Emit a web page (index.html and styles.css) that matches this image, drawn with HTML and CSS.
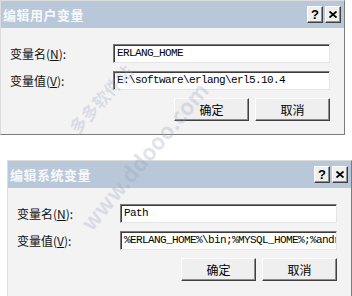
FILE: index.html
```html
<!DOCTYPE html>
<html>
<head>
  <title>编辑变量</title>
  <link rel="stylesheet" href="styles.css">
</head>
<body>
  <div class="page">
    <div class="dialog user">
      <div class="titlebar">
        <span class="title">编辑用户变量</span>
        <div class="caption-btns">
          <span class="cbtn help">?</span>
          <span class="cbtn close"><svg width="8" height="7" viewBox="0 0 8 7"><path d="M0.5 0.5 L7.5 6.5 M7.5 0.5 L0.5 6.5" stroke="#000" stroke-width="1.8" fill="none"/></svg></span>
        </div>
      </div>
      <div class="dialog-body">
        <div class="field">
          <label>变量名(<u>N</u>):</label>
          <div class="textbox">ERLANG_HOME</div>
        </div>
        <div class="field">
          <label>变量值(<u>V</u>):</label>
          <div class="textbox">E:\software\erlang\erl5.10.4</div>
        </div>
        <div class="actions">
          <button>确定</button>
          <button>取消</button>
        </div>
      </div>
    </div>

    <div class="dialog system">
      <div class="titlebar">
        <span class="title">编辑系统变量</span>
        <div class="caption-btns">
          <span class="cbtn help">?</span>
          <span class="cbtn close"><svg width="8" height="7" viewBox="0 0 8 7"><path d="M0.5 0.5 L7.5 6.5 M7.5 0.5 L0.5 6.5" stroke="#000" stroke-width="1.8" fill="none"/></svg></span>
        </div>
      </div>
      <div class="dialog-body">
        <div class="field">
          <label>变量名(<u>N</u>):</label>
          <div class="textbox">Path</div>
        </div>
        <div class="field">
          <label>变量值(<u>V</u>):</label>
          <div class="textbox">%ERLANG_HOME%\bin;%MYSQL_HOME%;%andr</div>
        </div>
        <div class="actions">
          <button>确定</button>
          <button>取消</button>
        </div>
      </div>
    </div>

    <!-- site watermark over the screenshot -->
    <div class="watermark mark-cn">多多软件站</div>
    <div class="watermark mark-url">www.ddooo.com</div>
  </div>
</body>
</html>
```

FILE: styles.css
```css
body {
  margin: 0;
  background: #fff;
  font-family: "Noto Sans CJK SC", "Noto Sans", sans-serif;
}

.page {
  position: relative;
  width: 352px;
  height: 296px;
  overflow: hidden;
}

.dialog {
  box-sizing: border-box;
  width: 345px;
  background: #f3f3f3;
  border: 1px solid;
  border-color: #dcdcdc #7c7c7c #7c7c7c #dcdcdc;
}

.dialog.user {
  height: 135px;
}

.dialog.system {
  margin-top: 25px;
  margin-left: 7px;
  height: 150px;
}

.titlebar {
  height: 27px;
  background: #b9c8d8;
  display: flex;
  align-items: center;
  justify-content: space-between;
  padding: 0 3px 0 2px;
}

.title {
  color: #f6f8fb;
  font-size: 13px;
  font-weight: bold;
  letter-spacing: 0.5px;
}

.caption-btns {
  display: flex;
  gap: 2px;
}

.cbtn {
  box-sizing: border-box;
  width: 16px;
  height: 17px;
  background: #efefef;
  border: 1px solid;
  border-color: #fff #404040 #404040 #fff;
  box-shadow: inset -1px -1px 0 #909090;
  display: flex;
  align-items: center;
  justify-content: center;
  font-family: "Liberation Sans", sans-serif;
  font-size: 13px;
  font-weight: bold;
  color: #000;
  line-height: 1;
}

.dialog-body {
  padding: 16px 14px 0 9px;
}

.field {
  display: grid;
  grid-template-columns: 103px 217px;
  align-items: center;
  margin-bottom: 8px;
}

.field label {
  font-size: 12px;
  color: #111;
}

.field label u {
  text-decoration: underline;
}

.textbox {
  box-sizing: border-box;
  height: 19px;
  background: #fff;
  border: 1px solid;
  border-color: #7a7a7a #e6e6e6 #e6e6e6 #7a7a7a;
  box-shadow: inset 1px 1px 0 #3c3c3c;
  padding: 0 0 0 3px;
  font-family: "Liberation Mono", monospace;
  font-size: 11px;
  letter-spacing: -0.6px;
  line-height: 17px;
  color: #000;
  white-space: nowrap;
  overflow: hidden;
}

.actions {
  display: flex;
  justify-content: flex-end;
  gap: 6px;
  margin-top: 1px;
  width: 320px;
}

.actions button {
  box-sizing: border-box;
  width: 75px;
  height: 23px;
  background: #efefef;
  border: 1px solid;
  border-color: #fff #404040 #404040 #fff;
  box-shadow: inset -1px -1px 0 #8c8c8c;
  font-family: "Noto Sans CJK SC", sans-serif;
  font-size: 12px;
  color: #000;
  padding: 0;
}

.watermark {
  position: absolute;
  color: rgba(150, 160, 190, 0.28);
  font-family: "Noto Sans CJK SC", "Liberation Sans", sans-serif;
  font-weight: bold;
  white-space: nowrap;
  transform-origin: left center;
}

.mark-cn {
  left: 72px;
  top: 118px;
  font-size: 17px;
  transform: rotate(-48deg);
}

.mark-url {
  left: 84px;
  top: 210px;
  font-size: 22px;
  transform: rotate(-50deg);
}
```
